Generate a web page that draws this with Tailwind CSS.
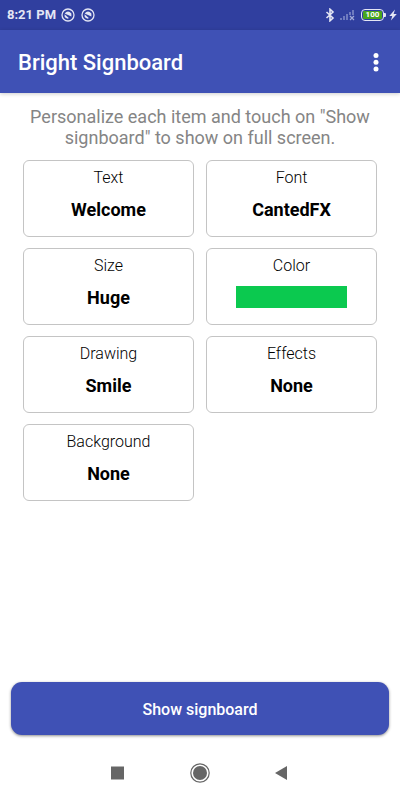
<!DOCTYPE html>
<html lang="en">
<head>
<meta charset="utf-8">
<meta name="viewport" content="width=device-width, initial-scale=1">
<title>Bright Signboard</title>
<script src="https://cdn.jsdelivr.net/npm/@tailwindcss/browser@4"></script>
</head>
<body class="flex min-h-screen flex-col bg-white font-['Roboto',sans-serif] text-black">
  <div class="flex h-[30px] items-center justify-between bg-[#303f9f] pl-[7px] pr-[3px] text-[#e4e6f4]">
    <div class="flex items-center gap-[5px]">
      <span class="text-[13px] leading-4 font-bold">8:21 PM</span>
      <span class="flex gap-[6px]">
        <svg class="size-[14px]" viewBox="0 0 14 14" fill="none" stroke="currentColor" aria-hidden="true"><circle cx="7" cy="7" r="6" stroke-width="1.3"/><path d="M3.600 5.400Q7 1.600 10.400 5.400V8.500z" fill="currentColor" stroke="none"/><path d="M3.600 6.300v2.500q1 1.700 3.200 1.900l1-.6z" fill="currentColor" stroke="none"/></svg>
        <svg class="size-[14px]" viewBox="0 0 14 14" fill="none" stroke="currentColor" aria-hidden="true"><circle cx="7" cy="7" r="6" stroke-width="1.3"/><path d="M3.600 5.400Q7 1.600 10.400 5.400V8.500z" fill="currentColor" stroke="none"/><path d="M3.600 6.300v2.500q1 1.700 3.200 1.900l1-.6z" fill="currentColor" stroke="none"/></svg>
      </span>
    </div>
    <div class="flex items-center">
      <svg class="h-[14px] w-[10px]" viewBox="0 0 10 14" fill="none" stroke="currentColor" stroke-width="1.6" aria-hidden="true"><path d="M1.500 4l6.500 6L5 12.800V1.200L8 4l-6.500 6"/></svg>
      <svg class="ml-1 h-3 w-4" viewBox="0 0 16 12" aria-hidden="true"><g fill="#6f7bbf"><path d="M1 9h2v2H1zM4 7h2v4H4zM7 5h2v6H7zM10 3h2v3h-2zM13 1h2v5h-2z"/></g><path d="M11 7l4 4M15 7l-4 4" stroke="#a3abd8" stroke-width="1.2"/></svg>
      <div class="ml-[6px] flex items-center">
        <div class="flex h-3 w-[23px] items-center justify-center rounded-[4px] border border-[#e4e6f4] bg-[#303f9f] p-px">
          <span class="flex h-2 w-full items-center justify-center rounded-[1px] bg-[#48a51c] text-[8px] leading-[8px] font-bold text-white">100</span>
        </div>
        <div class="h-1 w-[2px] rounded-r-[1px] bg-[#e4e6f4]"></div>
      </div>
      <svg class="ml-[3px] h-3 w-[8px]" viewBox="0 0 8 12" fill="currentColor" aria-hidden="true"><path d="M6 .5L.300 7h3L1.900 11.500 7.800 5H4.600z"/></svg>
    </div>
  </div>

  <header class="flex h-[63px] items-center justify-between bg-[#3f51b5] pt-[2px] pl-[18px] pr-[14px] text-white shadow-[0_1px_4px_rgba(0,0,0,0.2)]">
    <h1 class="text-[22px] leading-7 font-medium">Bright Signboard</h1>
    <button type="button" aria-label="More options" class="flex h-8 w-5 items-center justify-center">
      <svg class="h-5 w-[6px]" viewBox="0 0 6 20" fill="currentColor" aria-hidden="true"><circle cx="3" cy="2.500" r="2.500"/><circle cx="3" cy="9.200" r="2.500"/><circle cx="3" cy="15.900" r="2.500"/></svg>
    </button>
  </header>

  <main class="flex flex-1 flex-col">
    <p class="px-[23px] pt-[13px] text-center text-[18px] leading-[21px] text-[#858585]">Personalize each item and touch on "Show signboard" to show on full screen.</p>
    <div class="mt-3 grid grid-cols-2 gap-x-3 gap-y-[11px] px-[23px]">
      <button type="button" class="flex h-[77px] flex-col items-center rounded-md border border-[#c4c4c4] pt-[7px]"><span class="text-[16px] leading-5 font-light">Text</span><span class="mt-[10px] text-[18px] leading-6 font-bold">Welcome</span></button>
      <button type="button" class="flex h-[77px] flex-col items-center rounded-md border border-[#c4c4c4] pt-[7px]"><span class="text-[16px] leading-5 font-light">Font</span><span class="mt-[10px] text-[18px] leading-6 font-bold">CantedFX</span></button>
      <button type="button" class="flex h-[77px] flex-col items-center rounded-md border border-[#c4c4c4] pt-[7px]"><span class="text-[16px] leading-5 font-light">Size</span><span class="mt-[10px] text-[18px] leading-6 font-bold">Huge</span></button>
      <button type="button" class="flex h-[77px] flex-col items-center rounded-md border border-[#c4c4c4] pt-[7px]"><span class="text-[16px] leading-5 font-light">Color</span><span class="mt-[10px] h-[22px] w-[111px] bg-[#0bc94f]"></span></button>
      <button type="button" class="flex h-[77px] flex-col items-center rounded-md border border-[#c4c4c4] pt-[7px]"><span class="text-[16px] leading-5 font-light">Drawing</span><span class="mt-[10px] text-[18px] leading-6 font-bold">Smile</span></button>
      <button type="button" class="flex h-[77px] flex-col items-center rounded-md border border-[#c4c4c4] pt-[7px]"><span class="text-[16px] leading-5 font-light">Effects</span><span class="mt-[10px] text-[18px] leading-6 font-bold">None</span></button>
      <button type="button" class="flex h-[77px] flex-col items-center rounded-md border border-[#c4c4c4] pt-[7px]"><span class="text-[16px] leading-5 font-light">Background</span><span class="mt-[10px] text-[18px] leading-6 font-bold">None</span></button>
    </div>
    <div class="mt-auto px-[11px] pt-4 pb-[11px]">
      <button type="button" class="h-[53px] w-full rounded-[11px] bg-[#3f51b5] pt-[2px] text-[16px] leading-5 font-medium text-white shadow-[0_1px_3px_rgba(0,0,0,0.45)]">Show signboard</button>
    </div>
  </main>

  <nav class="flex h-[54px] items-center justify-center gap-[62px] text-[#666666]" aria-label="System navigation">
    <button type="button" aria-label="Recent apps" class="flex size-5 items-center justify-center"><svg class="size-[14px]" viewBox="0 0 14 14" fill="currentColor" aria-hidden="true"><path d="M0 .500h13v13H0z"/></svg></button>
    <button type="button" aria-label="Home" class="flex size-5 items-center justify-center"><svg class="size-5" viewBox="0 0 20 20" aria-hidden="true"><circle cx="10" cy="10" r="9.200" fill="none" stroke="currentColor" stroke-width="1.200"/><circle cx="10" cy="10" r="7" fill="currentColor"/></svg></button>
    <button type="button" aria-label="Back" class="flex size-5 items-center justify-center"><svg class="size-[14px]" viewBox="0 0 14 14" fill="currentColor" aria-hidden="true"><path d="M12 0v14L-.2 7z"/></svg></button>
  </nav>
</body>
</html>
